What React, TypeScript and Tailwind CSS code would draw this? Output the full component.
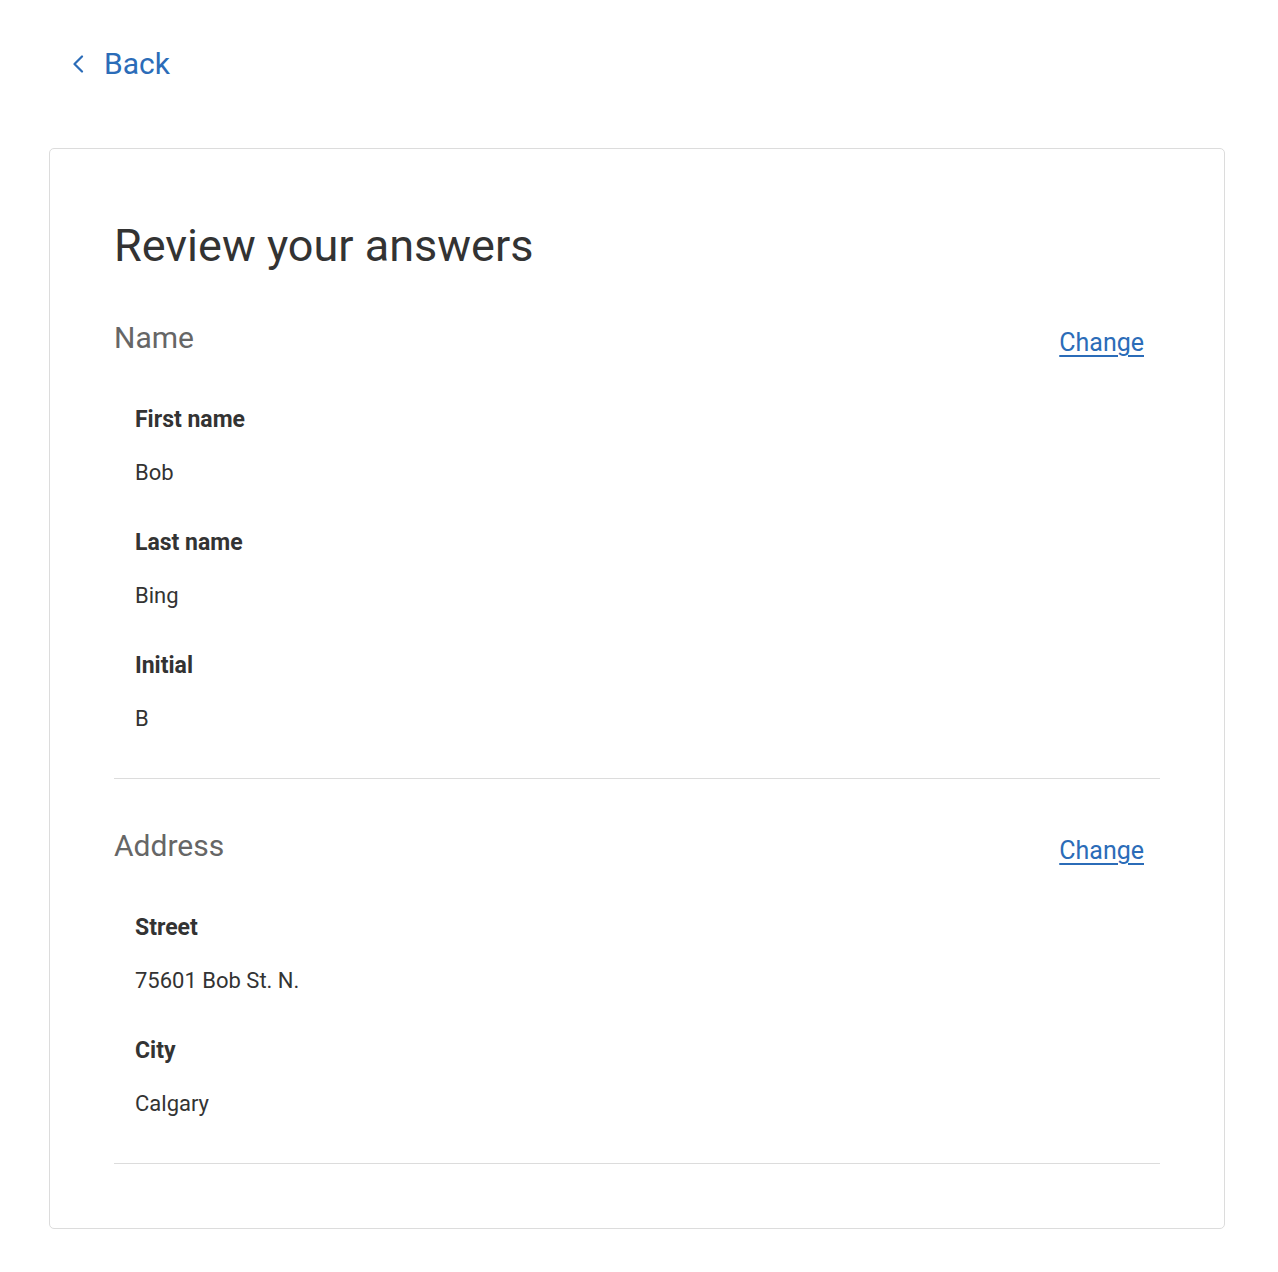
import React from "react";

type Item = { label: string; value: string };

function Section({ title, items }: { title: string; items: Item[] }) {
  return (
    <section className="border-b border-[#dcdcdc] pb-[44px]">
      <div className="flex items-start justify-between pr-[16px]">
        <h2 className="text-[30px] leading-[40px] text-[#666666] font-normal">{title}</h2>
        <a href="#" className="mt-[8px] text-[25px] leading-[34px] text-[#2b6cb8] underline underline-offset-[4px] decoration-[2px]">
          Change
        </a>
      </div>
      <dl className="mt-[45px] pl-[21px] flex flex-col gap-[40px]">
        {items.map((it) => (
          <div key={it.label} className="flex flex-col gap-[23px]">
            <dt className="text-[23px] leading-[30px] font-bold text-[#333333]">{it.label}</dt>
            <dd className="text-[22px] leading-[30px] text-[#333333]">{it.value}</dd>
          </div>
        ))}
      </dl>
    </section>
  );
}

export default function App() {
  return (
    <div className="min-h-[1272px] bg-white pl-[49px] pr-[53px] pt-[44px] pb-[44px]" style={{ fontFamily: "Roboto, 'Noto Sans', sans-serif" }}>
      <a href="#" className="inline-flex items-center gap-[20px] pl-[23px] text-[30px] leading-[40px] text-[#2b6cb8]">
        <svg width="12" height="18" viewBox="0 0 12 18" fill="none">
          <path d="M10 1.5 L2.5 9 L10 16.5" stroke="#2b6cb8" strokeWidth="2.2" strokeLinecap="round" strokeLinejoin="round" />
        </svg>
        <span>Back</span>
      </a>
      <div className="mt-[64px] rounded-[5px] border border-[#dcdcdc] px-[64px] pt-[69px] pb-[64px]">
        <h1 className="text-[45px] leading-[56px] text-[#333333] font-normal">Review your answers</h1>
        <div className="mt-[44px] flex flex-col gap-[47px]">
          <Section
            title="Name"
            items={[
              { label: "First name", value: "Bob" },
              { label: "Last name", value: "Bing" },
              { label: "Initial", value: "B" },
            ]}
          />
          <Section
            title="Address"
            items={[
              { label: "Street", value: "75601 Bob St. N." },
              { label: "City", value: "Calgary" },
            ]}
          />
        </div>
      </div>
    </div>
  );
}
